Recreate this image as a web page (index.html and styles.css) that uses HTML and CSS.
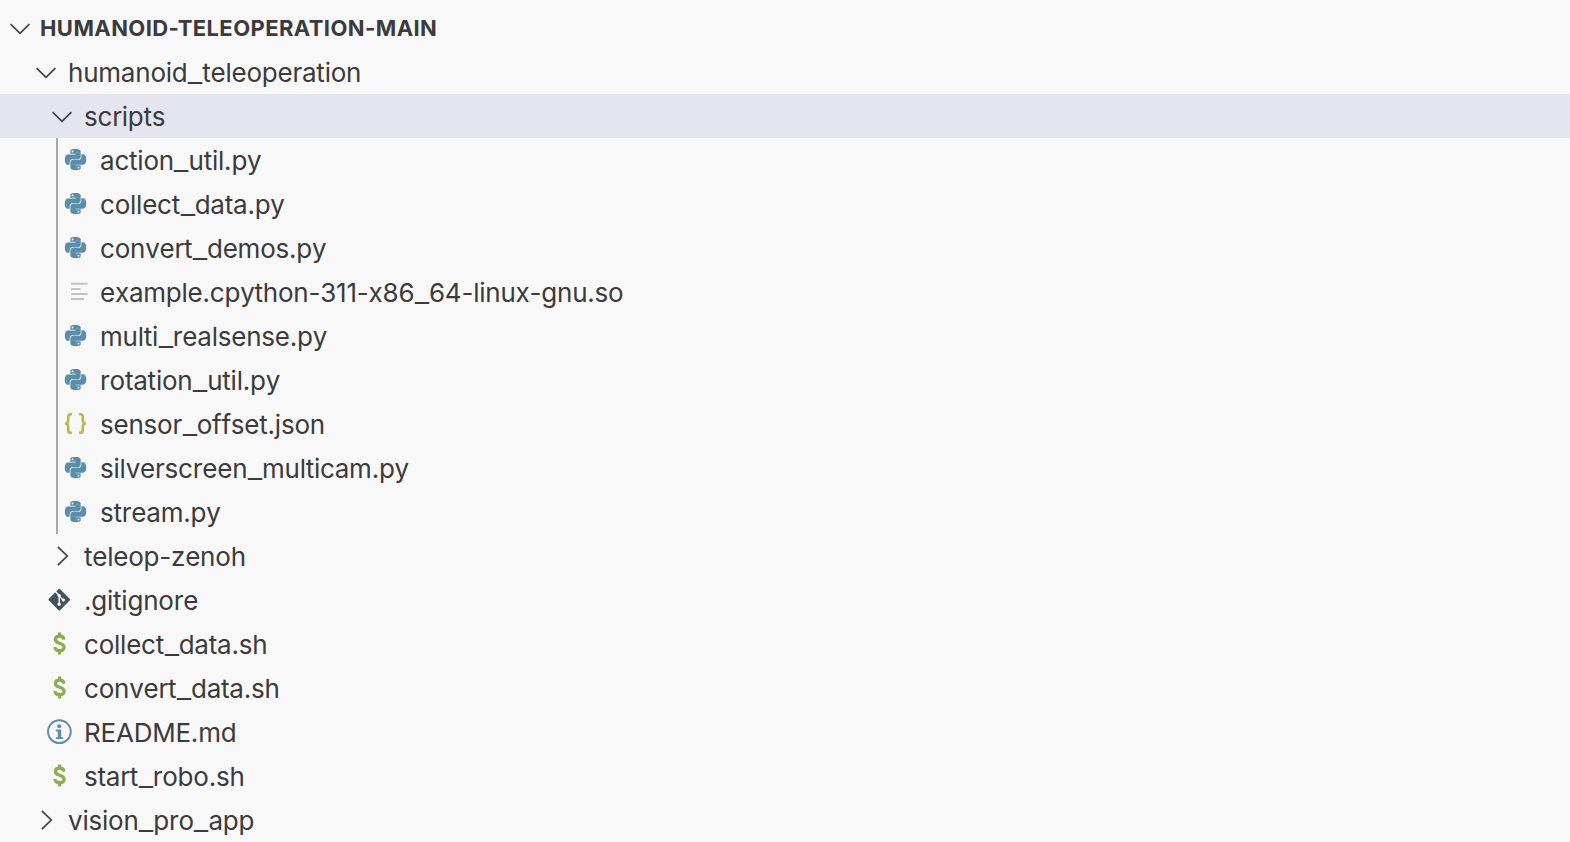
FILE: index.html
```html
<!DOCTYPE html>
<html lang="en">
<head>
  <meta charset="UTF-8">
  <meta name="viewport" content="width=device-width, initial-scale=1.0">
  <title>Explorer</title>
  <link rel="stylesheet" href="styles.css">
</head>
<body>
  <svg class="sprite">
    <symbol id="down" viewBox="0 0 32 44">
      <path d="M8.6 18.2L18 27.4L27.4 18.2" fill="none" stroke="#424242" stroke-width="1.7"/>
    </symbol>
    <symbol id="right" viewBox="0 0 32 44">
      <path d="M13.9 12.8L23.2 22L13.9 31.2" fill="none" stroke="#424242" stroke-width="1.7"/>
    </symbol>
    <symbol id="python" viewBox="0 0 32 44">
      <path transform="translate(4.9 10.9) scale(.885)" fill="#5b8ea9" d="M14.25.18l.9.2.73.26.59.3.45.32.34.34.25.34.16.33.1.3.04.26.02.2-.01.13V8.5l-.05.63-.13.55-.21.46-.26.38-.3.31-.33.25-.35.19-.35.14-.33.1-.3.07-.26.04-.21.02H8.77l-.69.05-.59.14-.5.22-.41.27-.33.32-.27.35-.2.36-.15.37-.1.35-.07.32-.04.27-.02.21v3.06H3.17l-.21-.03-.28-.07-.32-.12-.35-.18-.36-.26-.36-.36-.35-.46-.32-.59-.28-.73-.21-.88-.14-1.05-.05-1.23.06-1.22.16-1.04.24-.87.32-.71.36-.57.4-.44.42-.33.42-.24.4-.16.36-.1.32-.05.24-.01h.16l.06.01h8.16v-.83H6.18l-.01-2.75-.02-.37.05-.34.11-.31.17-.28.25-.26.31-.23.38-.2.44-.18.51-.15.58-.12.64-.1.71-.06.77-.04.84-.02 1.27.05zm-6.3 1.98l-.23.33-.08.41.08.41.23.34.33.22.41.09.41-.09.33-.22.23-.34.08-.41-.08-.41-.23-.33-.33-.22-.41-.09-.41.09zm13.09 3.95l.28.06.32.12.35.18.36.27.36.35.35.47.32.59.28.73.21.88.14 1.04.05 1.23-.06 1.23-.16 1.04-.24.86-.32.71-.36.57-.4.45-.42.33-.42.24-.4.16-.36.09-.32.05-.24.02-.16-.01h-8.22v.82h5.84l.01 2.76.02.36-.05.34-.11.31-.17.29-.25.25-.31.24-.38.2-.44.17-.51.15-.58.13-.64.09-.71.07-.77.04-.84.01-1.27-.04-1.07-.14-.9-.2-.73-.25-.59-.3-.45-.33-.34-.34-.25-.34-.16-.33-.1-.3-.04-.25-.02-.2.01-.13v-5.34l.05-.64.13-.54.21-.46.26-.38.3-.32.33-.24.35-.2.35-.14.33-.1.3-.06.26-.04.21-.02.13-.01h5.84l.69-.05.59-.14.5-.21.41-.28.33-.32.27-.35.2-.36.15-.36.1-.35.07-.32.04-.28.02-.21V6.07h2.09l.14.01zm-6.47 14.25l-.23.33-.08.41.08.41.23.33.33.23.41.08.41-.08.33-.23.23-.33.08-.41-.08-.41-.23-.33-.33-.23-.41-.08-.41.08z"/>
    </symbol>
    <symbol id="file" viewBox="0 0 32 44">
      <path d="M11 13.7h16.6M11 18.9h9.6M11 24h16.6M11 29h13" fill="none" stroke="#c2c4c4" stroke-width="2"/>
    </symbol>
    <symbol id="json" viewBox="0 0 32 44">
      <path d="M12 12.2h-1.2q-2.6 0-2.6 2.6v3.6q0 3-3 3.1q3 .1 3 3.1v3.6q0 2.6 2.6 2.6H12M19 12.2h1.2q2.6 0 2.6 2.6v3.6q0 3 3 3.1q-3 .1-3 3.1v3.6q0 2.6-2.6 2.6H19" fill="none" stroke="#b9b84a" stroke-width="2.6"/>
    </symbol>
    <symbol id="git" viewBox="0 0 32 44">
      <path d="M15.3 11.7L25.2 21.6L15.3 31.5L5.4 21.6z" fill="#41535b" stroke="#41535b" stroke-width="2" stroke-linejoin="round"/>
      <path d="M11.4 13.6L15.2 17.4V27M15.2 18L19.4 22.2" fill="none" stroke="#f8f8f8" stroke-width="1.4"/>
      <circle cx="15.2" cy="17.6" r="1.7" fill="#f8f8f8"/>
      <circle cx="15.2" cy="26.3" r="1.7" fill="#f8f8f8"/>
      <circle cx="19.3" cy="22.1" r="1.7" fill="#f8f8f8"/>
    </symbol>
    <symbol id="shell" viewBox="0 0 32 44">
      <path d="M19.9 17.7q-.2-3.5-4.3-3.5q-4.2 0-4.2 3.3q0 2.5 4.2 3.8q4.5 1.3 4.5 4q0 3.4-4.5 3.4q-4.5 0-4.6-3.7M15.6 10.4v4M15.6 28.5v4" fill="none" stroke="#89ae4c" stroke-width="3.2"/>
    </symbol>
    <symbol id="info" viewBox="0 0 32 44">
      <circle cx="15.4" cy="21.7" r="11.4" fill="none" stroke="#5b8ea9" stroke-width="1.9"/>
      <circle cx="15.2" cy="16.3" r="2" fill="#5b8ea9"/>
      <path d="M11.8 19.6h5.4v7.6h2v1.8h-7.4v-1.8h2v-5.8h-2z" fill="#5b8ea9"/>
    </symbol>
  </svg>

  <div class="explorer">
    <div class="row root">
      <svg class="icon"><use href="#down"/></svg>
      <span>HUMANOID-TELEOPERATION-MAIN</span>
    </div>
    <div class="row level1">
      <svg class="icon"><use href="#down"/></svg>
      <span>humanoid<i>_</i>teleoperation</span>
    </div>
    <div class="row level2 selected">
      <svg class="icon"><use href="#down"/></svg>
      <span>scripts</span>
    </div>
    <div class="children">
      <div class="row"><svg class="icon"><use href="#python"/></svg><span>action<i>_</i>util.py</span></div>
      <div class="row"><svg class="icon"><use href="#python"/></svg><span>collect<i>_</i>data.py</span></div>
      <div class="row"><svg class="icon"><use href="#python"/></svg><span>convert<i>_</i>demos.py</span></div>
      <div class="row"><svg class="icon"><use href="#file"/></svg><span>example.cpython-311-x86<i>_</i>64-linux-gnu.so</span></div>
      <div class="row"><svg class="icon"><use href="#python"/></svg><span>multi<i>_</i>realsense.py</span></div>
      <div class="row"><svg class="icon"><use href="#python"/></svg><span>rotation<i>_</i>util.py</span></div>
      <div class="row"><svg class="icon"><use href="#json"/></svg><span>sensor<i>_</i>offset.json</span></div>
      <div class="row"><svg class="icon"><use href="#python"/></svg><span>silverscreen<i>_</i>multicam.py</span></div>
      <div class="row"><svg class="icon"><use href="#python"/></svg><span>stream.py</span></div>
    </div>
    <div class="row level2"><svg class="icon"><use href="#right"/></svg><span>teleop-zenoh</span></div>
    <div class="row level2"><svg class="icon"><use href="#git"/></svg><span>.gitignore</span></div>
    <div class="row level2"><svg class="icon"><use href="#shell"/></svg><span>collect<i>_</i>data.sh</span></div>
    <div class="row level2"><svg class="icon"><use href="#shell"/></svg><span>convert<i>_</i>data.sh</span></div>
    <div class="row level2"><svg class="icon"><use href="#info"/></svg><span>README.md</span></div>
    <div class="row level2"><svg class="icon"><use href="#shell"/></svg><span>start<i>_</i>robo.sh</span></div>
    <div class="row level1"><svg class="icon"><use href="#right"/></svg><span>vision<i>_</i>pro<i>_</i>app</span></div>
  </div>
</body>
</html>
```
FILE: styles.css
```css
body {
  margin: 0;
  background-color: #f8f8f8;
  color: #3b3b3b;
  font-family: Inter, sans-serif;
  font-size: 26px;
}
.sprite {
  display: none;
}
.explorer {
  height: 842px;
  overflow: hidden;
}
.row {
  display: flex;
  align-items: center;
  gap: 8px;
  height: 44px;
  white-space: nowrap;
  font-kerning: none;
  letter-spacing: -0.22px;
}
.row span {
  padding-top: 1px;
}
/* wider underscore */
.row i {
  display: inline-block;
  font-style: normal;
  margin: 0 1.5px;
  transform: scaleX(1.22);
}
.icon {
  width: 32px;
  height: 44px;
  flex: none;
}
.root {
  padding-top: 6px;
  font-size: 22px;
  font-weight: bold;
  font-kerning: normal;
  letter-spacing: 0.42px;
}
.root span {
  padding-top: 0;
}
.root .icon {
  margin-left: 2px;
  margin-right: -2px;
}
.level1 {
  padding-left: 28px;
}
.level2 {
  padding-left: 44px;
}
.selected {
  background-color: #e5e5ef;
}
.children {
  margin-left: 56px;
  border-left: 2px solid #a9a9a9;
}
.children .row {
  padding-left: 2px;
}
```
